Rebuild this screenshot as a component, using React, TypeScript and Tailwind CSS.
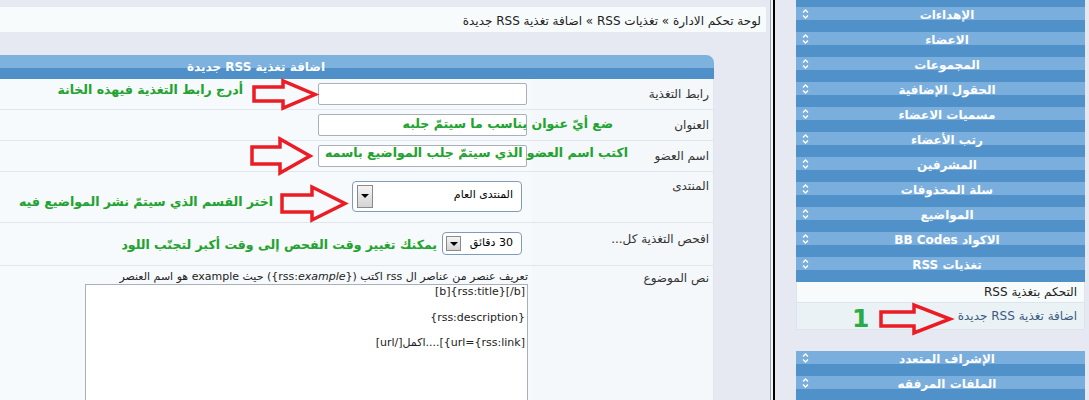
import React from 'react';

const cats = [
  'الإهداءات',
  'الاعضاء',
  'المجموعات',
  'الحقول الإضافية',
  'مسميات الاعضاء',
  'رتب الأعضاء',
  'المشرفين',
  'سلة المحذوفات',
  'المواضيع',
  'الاكواد BB Codes',
  'تغذيات RSS',
];

// lines as the old editor shows them
const bodyText = '[b]{rss:title}[/b]\n\n{rss:description}\n\n[url/]اكمل....[{url={rss:link]';

function Chevrons() {
  return (
    <svg width="7" height="12" viewBox="0 0 7 12" className="shrink-0">
      <path d="M1 4.5 3.5 2 6 4.5M1 7.5 3.5 10 6 7.5" fill="none" stroke="#fff" strokeWidth="1.3" />
    </svg>
  );
}

function CatBar({ title }: { title: string }) {
  return (
    <div className="h-[25px] bg-[linear-gradient(#7aaedc_0,#7aaedc_13px,#5191c9_13px,#5191c9_100%)] flex items-start">
      <div className="ml-[6px] mt-[1px]">
        <Chevrons />
      </div>
      <div dir="rtl" className="flex-1 text-center text-white font-bold text-[12px] leading-[16px]">
        {title}
      </div>
    </div>
  );
}

function Arrow({ w, h, className }: { w: number; h: number; className: string }) {
  const s = 2;
  const t = Math.round(h * 0.27);
  const b = Math.round(h * 0.72);
  const base = Math.round(w * 0.48);
  const d = `M${s} ${t}H${base}V${s}L${w - s} ${h / 2}L${base} ${h - s}V${b}H${s}Z`;
  return (
    <svg width={w} height={h} className={className} overflow="visible">
      <path d={d} fill="none" stroke="#ec1c24" strokeWidth="3.5" />
    </svg>
  );
}

function Row({ label, h, children, labelTop }: { label: string; h: string; children: React.ReactNode; labelTop?: string }) {
  return (
    <div className={`grid grid-cols-[532px_182px] border-b border-[#dfe6ed] ${h}`}>
      <div dir="rtl" className="bg-[#f7fafc] flex justify-start">
        {children}
      </div>
      <div dir="rtl" className={`bg-[#f4f8fb] border-r border-[#dfe6ed] pr-[4px] text-[12px] text-[#333] ${labelTop ?? 'pt-[6px]'}`}>
        {label}
      </div>
    </div>
  );
}

function SelectBtn({ big }: { big?: boolean }) {
  return (
    <div
      className={`flex justify-center border border-[#8a8a8a] bg-[linear-gradient(#f4f4f4,#d4d4d4)] ${
        big ? 'w-[16px] h-[23px] pt-[8px]' : 'w-[15px] h-[15px] pt-[5px]'
      }`}
    >
      <div className="w-0 h-0 border-l-[4px] border-r-[4px] border-t-[4px] border-l-transparent border-r-transparent border-t-black" />
    </div>
  );
}

const green = "absolute whitespace-nowrap font-bold text-[#21a13a] text-[12.5px] leading-[16px] [text-shadow:0_0_1px_#e2f5b0]";

export default function App() {
  return (
    <div className="relative w-[1089px] h-[400px] overflow-hidden bg-[#e6e9f2] flex font-['DejaVu_Sans',sans-serif]">
      {/* main area */}
      <div className="w-[767px] shrink-0 pt-[7px]">
        <div dir="rtl" className="h-[25px] w-[766px] bg-[#f8fbfc] flex items-center pr-[5px] pt-[2px] text-[12px] text-[#222]">
          لوحة تحكم الادارة » تغذيات RSS » اضافة تغذية RSS جديدة
        </div>
        <div className="w-[714px] mt-[23px]">
          <div dir="rtl" className="h-[24px] rounded-tr-[8px] bg-[linear-gradient(#7db1de_0,#7db1de_13px,#5090c9_13px,#5090c9_100%)] flex items-center pr-[389px] text-white font-bold text-[12px]">
            اضافة تغذية RSS جديدة
          </div>
          <Row label="رابط التغذية" h="h-[31px]">
            <div className="mr-[5px] mt-[4px] w-[209px] h-[22px] bg-white border border-[#a9b0b8] rounded-[2px]" />
          </Row>
          <Row label="العنوان" h="h-[31px]">
            <div className="mr-[5px] mt-[4px] w-[209px] h-[22px] bg-white border border-[#a9b0b8] rounded-[2px]" />
          </Row>
          <Row label="اسم العضو" h="h-[31px]">
            <div className="mr-[5px] mt-[4px] w-[209px] h-[22px] bg-white border border-[#a9b0b8] rounded-[2px]" />
          </Row>
          <Row label="المنتدى" h="h-[51px]" labelTop="pt-[5px]">
            <div className="mr-[10px] mt-[9px] w-[170px] h-[31px] bg-white border border-[#7f9db9] rounded-[4px] flex justify-between pr-[8px] pl-[4px] pt-[3px]">
              <div className="text-[11px] text-black pt-[2px]">المنتدى العام</div>
              <SelectBtn big />
            </div>
          </Row>
          <Row label="افحص التغذية كل..." h="h-[43px]" labelTop="pt-[7px]">
            <div className="mr-[10px] mt-[9px] w-[80px] h-[23px] bg-white border border-[#7f9db9] rounded-[4px] flex items-center justify-between pr-[8px] pl-[3px]">
              <div className="text-[11px] text-black">30 دقائق</div>
              <SelectBtn />
            </div>
          </Row>
          <Row label="نص الموضوع" h="h-[140px]" labelTop="pt-[3px]">
            <div className="mr-[4px] pt-[4px] flex flex-col items-start">
              <div className="text-[11px] leading-[13px] text-[#222] whitespace-nowrap">
                تعريف عنصر من عناصر ال rss اكتب ({'{'}rss:<i>example</i>{'}'}) حيث example هو اسم العنصر
              </div>
              <textarea
                dir="ltr"
                readOnly
                defaultValue={bodyText}
                className="mt-[1px] w-[443px] h-[130px] bg-white border border-[#a9b0b8] resize-none text-right text-[11px] leading-[12.75px] text-[#222] px-[2px] pt-[1px] outline-none font-['DejaVu_Sans',sans-serif]"
              />
            </div>
          </Row>
        </div>
      </div>

      {/* frame divider */}
      <div className="w-[29px] shrink-0 flex">
        <div className="ml-[3px] w-[1px] h-full bg-[#9da3ab]" />
        <div className="w-[2px] h-full bg-[#f4f5f8]" />
        <div className="w-[2px] h-full bg-black" />
      </div>

      {/* sidebar */}
      <div className="w-[289px] shrink-0">
        <div className="h-[7px] bg-[#5191c9]" />
        {cats.map((c) => (
          <CatBar key={c} title={c} />
        ))}
        <div dir="rtl" className="border border-t-0 border-[#dce5ec] text-[12px]">
          <div className="h-[21px] bg-[#f8fbfc] pr-[7px] flex items-center text-[#222] border-b border-[#dce5ec]">التحكم بتغذية RSS</div>
          <div className="h-[26px] bg-[#eaf2f6] pr-[7px] flex items-center text-[#3c5a7e]">اضافة تغذية RSS جديدة</div>
        </div>
        <div className="mt-[21px]">
          <CatBar title="الإشراف المتعدد" />
          <CatBar title="الملفات المرفقه" />
        </div>
      </div>

      {/* annotations */}
      <Arrow w={65} h={31} className="absolute left-[252px] top-[79px]" />
      <Arrow w={62} h={38} className="absolute left-[250px] top-[137px]" />
      <Arrow w={67} h={37} className="absolute left-[280px] top-[185px]" />
      <Arrow w={73} h={32} className="absolute left-[879px] top-[303px]" />

      <div dir="rtl" className={`${green} right-[846px] top-[82px]`}>أدرج رابط التغذية فيهذه الخانة</div>
      <div dir="rtl" className={`${green} right-[476px] top-[116px]`}>ضع أيّ عنوان يناسب ما سيتمّ جلبه</div>
      <div dir="rtl" className={`${green} right-[461px] top-[145px]`}>اكتب اسم العضو الذي سيتمّ جلب المواضيع باسمه</div>
      <div dir="rtl" className={`${green} right-[816px] top-[194px]`}>اختر القسم الذي سيتمّ نشر المواضيع فيه</div>
      <div dir="rtl" className={`${green} right-[652px] top-[237px]`}>يمكنك تغيير وقت الفحص إلى وقت أكبر لتجنّب اللود</div>
      <div className="absolute left-[852px] top-[305px] text-[25px] leading-[28px] font-bold text-[#27ad44]">1</div>
    </div>
  );
}
